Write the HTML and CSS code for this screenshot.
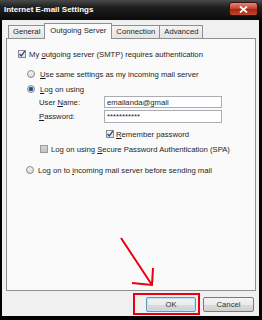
FILE: index.html
```html
<!DOCTYPE html>
<html>
<head>
<meta charset="utf-8">
<link rel="stylesheet" href="styles.css">
</head>
<body>
<div class="window">
  <div class="titlebar">
    <span class="title">Internet E-mail Settings</span>
    <span class="close"><svg width="9" height="7" viewBox="0 0 9 7"><path d="M1 0.5 L8 6.5 M8 0.5 L1 6.5" stroke="#fff" stroke-width="1.8"/></svg></span>
  </div>
  <div class="client">
    <div class="tabs">
      <div class="tab">General</div>
      <div class="tab active">Outgoing Server</div>
      <div class="tab">Connection</div>
      <div class="tab">Advanced</div>
    </div>
    <div class="panel">
      <div class="row r-smtp"><span class="cb"><svg width="8" height="8" viewBox="0 0 8 8"><path d="M1.5 4 L3.3 6 L6.8 1.2" fill="none" stroke="#2b4b9b" stroke-width="1.4"/></svg></span><span class="lbl">My <u>o</u>utgoing server (SMTP) requires authentication</span></div>
      <div class="row r-same"><span class="rb"></span><span class="lbl"><u>U</u>se same settings as my incoming mail server</span></div>
      <div class="row r-logon"><span class="rb on"></span><span class="lbl"><u>L</u>og on using</span></div>
      <div class="field f-user"><span class="flabel">User <u>N</u>ame:</span><span class="input">emailanda@gmail</span></div>
      <div class="field f-pass"><span class="flabel"><u>P</u>assword:</span><span class="input">***********</span></div>
      <div class="row r-remember"><span class="cb"><svg width="8" height="8" viewBox="0 0 8 8"><path d="M1.5 4 L3.3 6 L6.8 1.2" fill="none" stroke="#2b4b9b" stroke-width="1.4"/></svg></span><span class="lbl tight"><u>R</u>emember password</span></div>
      <div class="row r-spa"><span class="cb off"></span><span class="lbl">Log on using <u>S</u>ecure Password Authentication (SPA)</span></div>
      <div class="row r-incoming"><span class="rb"></span><span class="lbl near">Log on to <u>i</u>ncoming mail server before sending mail</span></div>
    </div>
    <div class="buttons">
      <div class="btn default">OK</div>
      <div class="btn">Cancel</div>
    </div>
  </div>
  <div class="highlight"></div>
  <svg class="arrow" width="262" height="320" viewBox="0 0 262 320">
    <path d="M121 238 L152 285 M153 268 L152 285 L132 283" fill="none" stroke="#e60010" stroke-width="2"/>
  </svg>
</div>
</body>
</html>
```
FILE: styles.css
```css
* { box-sizing: border-box; }
html, body { margin: 0; padding: 0; background: #000; }
body {
  font-family: "Liberation Sans", Arial, sans-serif;
  font-size: 7.7px;
  color: #1e1e1e;
}
u { text-decoration: underline; text-underline-offset: 1px; }

.window {
  position: relative;
  width: 262px;
  height: 320px;
  background: #000;
  display: flex;
  flex-direction: column;
}

.titlebar {
  height: 20px;
  flex: none;
  display: flex;
  justify-content: space-between;
  align-items: flex-start;
  padding: 0 4px 0 4px;
  background: linear-gradient(#4a4a4a 0, #202020 35%, #0a0a0a 100%);
}
.title {
  color: #fff;
  font-weight: bold;
  font-size: 8px;
  line-height: 19px;
}
.close {
  margin-top: 2px;
  width: 29px;
  height: 14px;
  border: 1px solid #3a1010;
  border-radius: 3px;
  background: linear-gradient(#e08a7c 0, #c7442f 45%, #a52612 55%, #c4462e 100%);
  display: flex;
  align-items: center;
  justify-content: center;
}

.client {
  flex: 1;
  margin: 0 3px 4px 2px;
  background: #f0f0f0;
  padding: 3px 3px 4px 4px;
  display: flex;
  flex-direction: column;
}

.tabs {
  display: flex;
  align-items: flex-end;
  height: 16px;
  margin: 0 0 -1px 2px;
  position: relative;
  z-index: 1;
}
.tab {
  height: 13px;
  margin-bottom: 1px;
  padding: 0 4px;
  line-height: 12px;
  border: 1px solid #8e8f8f;
  border-bottom: none;
  border-right: none;
  background: linear-gradient(#f4f4f4, #e4e4e4);
  white-space: nowrap;
}
.tab:last-child { border-right: 1px solid #8e8f8f; }
.tab.active {
  height: 16px;
  margin-bottom: 0;
  padding: 0 5px;
  line-height: 14px;
  background: #fafafa;
  border-right: 1px solid #8e8f8f;
}
.tab.active + .tab { border-left: none; }

.panel {
  flex: 1;
  background: #fafafa;
  border: 1px solid #8e8f8f;
  display: flex;
  flex-direction: column;
  align-items: flex-start;
}

.row {
  display: flex;
  align-items: center;
  height: 8px;
  white-space: nowrap;
}
.lbl { margin-left: 3px; line-height: 9px; }
.rb + .lbl { margin-left: 5px; }
.lbl.tight { margin-left: 2px; }
.rb + .lbl.near { margin-left: 4px; }

.cb {
  width: 8px;
  height: 8px;
  border: 1px solid #8a8a8a;
  background: linear-gradient(#f8f8f8, #e2e2e2);
  display: flex;
  align-items: center;
  justify-content: center;
  flex: none;
}
.cb svg { margin: -1px; }
.cb.off { background: linear-gradient(#d6d6d6, #c2c2c2); border-color: #9a9a9a; }
.rb {
  width: 8px;
  height: 8px;
  border-radius: 50%;
  border: 1px solid #8a8a8a;
  background: linear-gradient(#f4f4f4, #dcdcdc);
  flex: none;
}
.rb.on { background: radial-gradient(circle, #1d3f7a 0, #2f5fa8 45%, #cfe0f2 60%, #e6e6e6 100%); }

.r-smtp { margin: 11px 0 0 11px; }
.r-same { margin: 12px 0 0 20px; }
.r-logon { margin: 7px 0 0 20px; }
.r-remember { margin: 7px 0 0 99px; }
.r-spa { margin: 7px 0 0 33px; }
.r-incoming { margin: 13px 0 0 19px; }

.field {
  display: flex;
  align-items: center;
  margin-left: 32px;
}
.f-user { margin-top: 3px; height: 12px; }
.f-pass { margin-top: 2px; height: 13px; }
.flabel { width: 65px; }
.input {
  width: 118px;
  height: 100%;
  background: #fff;
  border: 1px solid #abadb3;
  padding-left: 2px;
  display: flex;
  align-items: center;
}

.buttons {
  display: flex;
  justify-content: flex-end;
  gap: 7px;
  margin-top: 6px;
  padding-right: 2px;
}
.btn {
  height: 15px;
  width: 51px;
  border: 1px solid #7a7a7a;
  border-radius: 2px;
  background: linear-gradient(#f4f4f4 0, #ebebeb 50%, #dcdcdc 51%, #d0d0d0 100%);
  display: flex;
  align-items: center;
  justify-content: center;
  color: #333;
}
.btn.default {
  width: 50px;
  border-color: #5c9bc8;
  box-shadow: inset 0 0 0 1px #bfe2f5;
}

.highlight {
  position: absolute;
  left: 133px;
  top: 293px;
  width: 67px;
  height: 22px;
  border: 2px solid #e60010;
}
.arrow {
  position: absolute;
  left: 0;
  top: 0;
  pointer-events: none;
}
```
